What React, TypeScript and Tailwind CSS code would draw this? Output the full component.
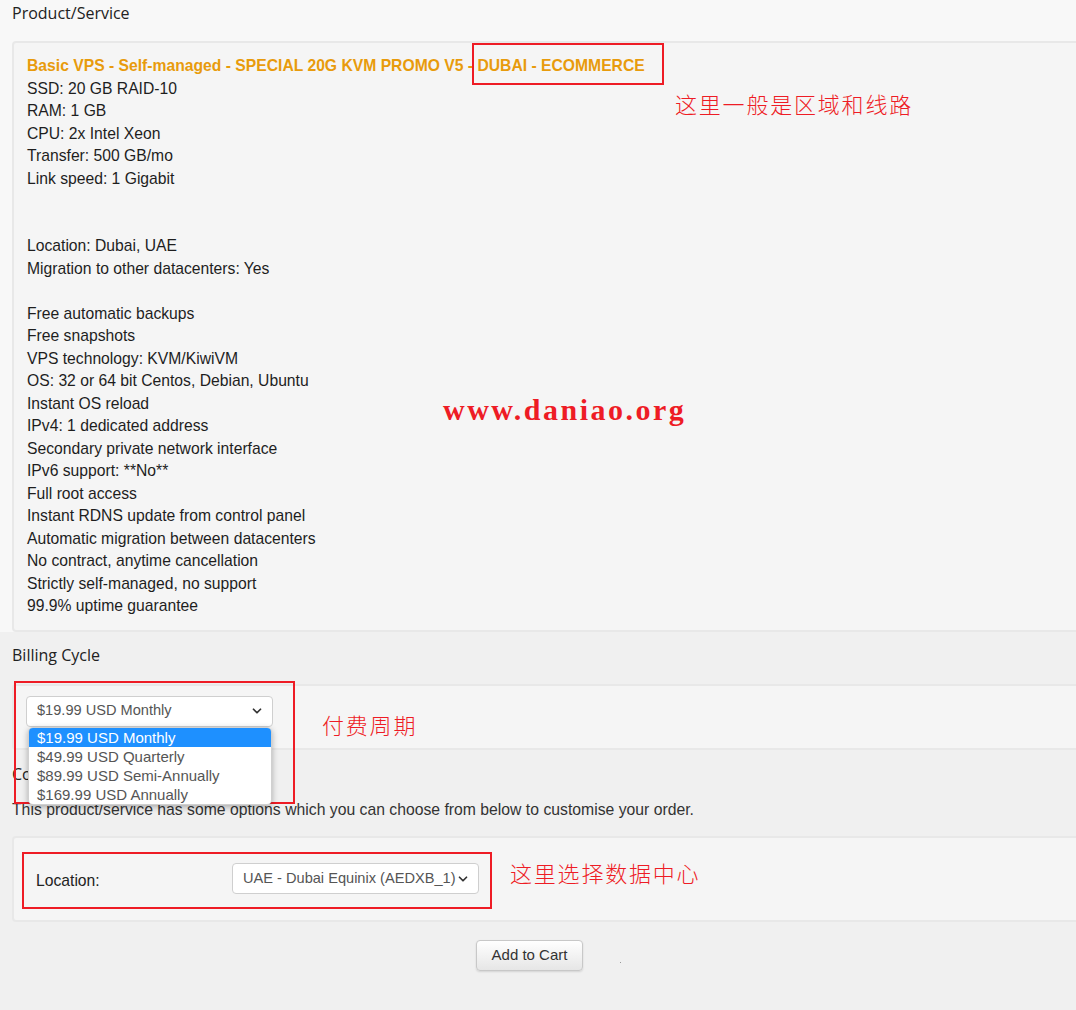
import { ChevronDown } from 'lucide-react'

const SPECS: string[] = [
  'SSD: 20 GB RAID-10',
  'RAM: 1 GB',
  'CPU: 2x Intel Xeon',
  'Transfer: 500 GB/mo',
  'Link speed: 1 Gigabit',
  '',
  '',
  'Location: Dubai, UAE',
  'Migration to other datacenters: Yes',
  '',
  'Free automatic backups',
  'Free snapshots',
  'VPS technology: KVM/KiwiVM',
  'OS: 32 or 64 bit Centos, Debian, Ubuntu',
  'Instant OS reload',
  'IPv4: 1 dedicated address',
  'Secondary private network interface',
  'IPv6 support: **No**',
  'Full root access',
  'Instant RDNS update from control panel',
  'Automatic migration between datacenters',
  'No contract, anytime cancellation',
  'Strictly self-managed, no support',
  '99.9% uptime guarantee',
]

const CYCLES = ['$19.99 USD Monthly', '$49.99 USD Quarterly', '$89.99 USD Semi-Annually', '$169.99 USD Annually']

const heading = "font-['Open_Sans',sans-serif] text-[16px] text-[#222] pl-3"
const panel = 'ml-3 -mr-4 rounded-[4px] border-2 border-[#e8e8e8] bg-[#f5f5f5]'
const note = "absolute font-['Noto_Sans_CJK_SC',sans-serif] font-light text-[22px] leading-none tracking-[1.8px] text-[#ee1c25] whitespace-nowrap"

const SelectBox = ({ label, width }: { label: string; width: string }) => (
  <div className={`${width} h-[31px] flex items-center justify-between rounded-[4px] border border-[#cfcfcf] bg-white pl-[10px] pr-[8px]`}>
    <span className="overflow-hidden whitespace-nowrap text-[14.6px] text-[#555]">{label}</span>
    <ChevronDown size={14} strokeWidth={3} className="shrink-0 text-[#333]" />
  </div>
)

export default function App() {
  return (
    <div className="relative h-[1010px] w-[1076px] overflow-hidden bg-[#f0f0f0] font-['Liberation_Sans',Arial,sans-serif] text-[#1e1e1e]">
      <div className="bg-[#f8f8f8] pt-[2px] pb-[17px]">
        <h2 className={`${heading} leading-[22px]`}>Product/Service</h2>
      </div>

      <div className="bg-[#f8f8f8] -mt-[8px] pt-[8px]">
        <div className={`${panel} pt-[12px] pb-[12px] pl-[13px] text-[15.7px] leading-[22.5px]`}>
          <p className="font-bold text-[#e89b0c]">Basic VPS - Self-managed - SPECIAL 20G KVM PROMO V5 - DUBAI - ECOMMERCE</p>
          {SPECS.map((line, i) => (
            <p key={i} className="h-[22.5px]">{line}</p>
          ))}
        </div>
      </div>

      <h2 className={`${heading} mt-[12px] leading-[22px]`}>Billing Cycle</h2>

      <div className={`${panel} mt-[18px] h-[66px] pt-[10px] pl-[12px]`}>
        <div className="relative">
          <SelectBox label="$19.99 USD Monthly" width="w-[247px]" />
          <div className="absolute left-[2px] top-[31px] z-10 w-[244px] overflow-hidden rounded-[5px] border border-[#d0d0d0] bg-white py-0 text-[15px] leading-[19px] text-[#555] shadow-[0_2px_6px_rgba(0,0,0,0.3)]">
            {CYCLES.map((c, i) => (
              <div key={c} className={i === 0 ? 'bg-[#1e90ff] pl-[8px] text-white' : 'pl-[8px]'}>{c}</div>
            ))}
          </div>
        </div>
      </div>

      <h2 className={`${heading} mt-[13px] leading-[22px]`}>Configurable Options</h2>
      <p className="mt-[16px] pl-3 text-[15.75px] leading-[18px] text-[#333]">
        This product/service has some options which you can choose from below to customise your order.
      </p>

      <div className={`${panel} mt-[17px] h-[86px] flex items-center`}>
        <span className="w-[218px] pl-[22px] pt-[4px] text-[15.7px] text-[#222]">Location:</span>
        <SelectBox label="UAE - Dubai Equinix (AEDXB_1)" width="w-[247px]" />
      </div>

      <div className="mt-[18px] flex items-start pl-[476px]">
        <button className="h-[31px] w-[107px] rounded-[4px] border border-[#c8c8c8] bg-gradient-to-b from-white to-[#e6e6e6] text-[15px] text-[#333] shadow-[0_1px_2px_rgba(0,0,0,0.12)]">
          Add to Cart
        </button>
        <span className="ml-[37px] mt-[22px] h-px w-px bg-[#999]" />
      </div>

      {/* annotations */}
      <div className="absolute left-[472px] top-[43px] h-[42px] w-[192px] border-2 border-[#ee1c25]" />
      <div className="absolute left-[14px] top-[681px] h-[123px] w-[281px] border-2 border-[#ee1c25]" />
      <div className="absolute left-[22px] top-[852px] h-[57px] w-[470px] border-2 border-[#ee1c25]" />

      <span className={`${note} left-[675px] top-[92px]`}>这里一般是区域和线路</span>
      <span className={`${note} left-[322px] top-[713px]`}>付费周期</span>
      <span className={`${note} left-[510px] top-[861px]`}>这里选择数据中心</span>
      <span className="absolute left-[443px] top-[390px] font-['Liberation_Serif',serif] text-[30px] font-bold leading-[40px] tracking-[2.5px] text-[#ee1c25]">
        www.daniao.org
      </span>
    </div>
  )
}
